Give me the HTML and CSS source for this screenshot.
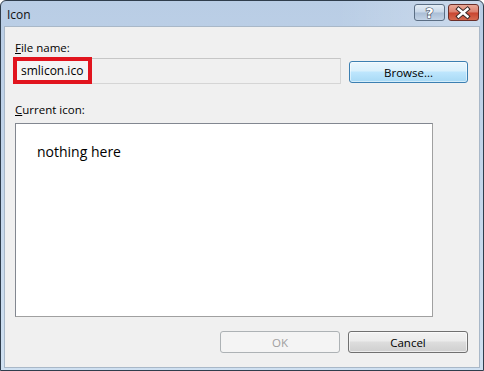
FILE: index.html
```html
<!DOCTYPE html>
<html>
<head>
<meta charset="utf-8">
<link rel="stylesheet" href="styles.css">
</head>
<body>
<div class="window">
  <div class="titlebar">
    <span class="title">Icon</span>
    <div class="caption-buttons">
      <div class="cap-btn help">
        <svg width="31" height="17" viewBox="0 0 31 17"><text x="15.5" y="14" text-anchor="middle" class="q">?</text></svg>
      </div>
      <div class="cap-btn close">
        <svg width="31" height="17" viewBox="0 0 31 17">
          <path d="M10.5 5 L19.5 12.5 M19.5 5 L10.5 12.5" stroke="#3a2a28" stroke-width="4.4" stroke-linecap="square"/>
          <path d="M10.5 5 L19.5 12.5 M19.5 5 L10.5 12.5" stroke="#ffffff" stroke-width="2.4" stroke-linecap="square"/>
        </svg>
      </div>
    </div>
  </div>
  <div class="client">
    <div class="label"><u>F</u>ile name:</div>
    <div class="file-row">
      <div class="textfield">
        <span class="highlight">smlicon.ico</span>
      </div>
      <button class="btn default">Browse...</button>
    </div>
    <div class="label label-current"><u>C</u>urrent icon:</div>
    <div class="iconbox"><span class="nothing">nothing here</span></div>
    <div class="actions">
      <button class="btn disabled">OK</button>
      <button class="btn">Cancel</button>
    </div>
  </div>
</div>
</body>
</html>
```

FILE: styles.css
```css
* { box-sizing: border-box; }
html, body { margin: 0; padding: 0; }
body {
  width: 484px;
  height: 371px;
  background: #ffffff;
  font-family: "Open Sans", "Noto Sans", sans-serif;
  font-size: 11.5px;
  color: #000;
  overflow: hidden;
}
.window {
  width: 484px;
  height: 371px;
  border: 1px solid #2f3d4c;
  border-radius: 6px 6px 0 0;
  background: linear-gradient(180deg, #b9cde5 0%, #c6d8ec 60%, #cfe0f1 100%);
  padding: 0 3px 2px 3px;
  display: flex;
  flex-direction: column;
}
.titlebar {
  height: 25px;
  display: flex;
  align-items: flex-start;
  justify-content: space-between;
  background: linear-gradient(90deg, rgba(255,255,255,0) 0%, rgba(255,255,255,0) 70%, rgba(255,255,255,0.25) 100%);
}
.title {
  font-family: "Open Sans", "Noto Sans", sans-serif;
  font-size: 12px;
  line-height: 16px;
  margin: 6px 0 0 3px;
  color: #111;
}
.caption-buttons {
  display: flex;
  gap: 3px;
  margin-top: 3px;
  margin-right: 1px;
}
.cap-btn {
  height: 17px;
  border: 1px solid #5b6e84;
  border-radius: 3px;
  overflow: hidden;
  display: flex;
}
.cap-btn svg { display: block; margin: -1px; }
.help {
  width: 31px;
  background: linear-gradient(180deg, #e4edf6 0%, #c8d7e8 48%, #a9bdd5 52%, #c3d3e6 100%);
}
.q {
  font-family: "DejaVu Sans", sans-serif;
  font-size: 14px;
  font-weight: bold;
  fill: #ffffff;
  stroke: #3f4d5e;
  stroke-width: 1.2px;
  paint-order: stroke;
}
.close {
  width: 31px;
  border-color: #6b2f29;
  background: linear-gradient(180deg, #e9a998 0%, #dc7f6d 48%, #c8442f 52%, #d66a4f 100%);
}
.client {
  flex: 1;
  background: #f0f0f0;
  border: 1px solid #a9b8c8;
  padding: 13px 0 0 10px;
  display: flex;
  flex-direction: column;
}
.label {
  line-height: 15px;
  height: 15px;
}
.file-row {
  display: flex;
  align-items: flex-start;
  margin-top: 3px;
}
.textfield {
  width: 326px;
  height: 26px;
  border: 1px solid #d5d5d5;
  border-top-color: #c6c6c6;
  background: #f0f0f0;
  position: relative;
}
.highlight {
  position: absolute;
  left: -3px;
  top: -2px;
  width: 79px;
  height: 27px;
  border: 4px solid #e1141e;
  padding-left: 4px;
  line-height: 19px;
  font-size: 12px;
  background: #f4f4f4;
}
.btn {
  font-family: "Open Sans", "Noto Sans", sans-serif;
  font-size: 11.5px;
  color: #000;
  width: 120px;
  height: 22px;
  border: 1px solid #707070;
  border-radius: 3px;
  background: linear-gradient(180deg, #f2f2f2 0%, #ebebeb 45%, #dddddd 50%, #cfcfcf 100%);
  box-shadow: inset 0 0 0 1px rgba(255,255,255,0.6);
  padding: 0;
  line-height: 19px;
}
.file-row .btn {
  margin-top: 3px;
  margin-left: 8px;
  width: 119px;
}
.btn.default {
  border-color: #3c7fb1;
  background: linear-gradient(180deg, #eaf6fd 0%, #d9f0fc 45%, #bee6fd 50%, #a7d9f5 100%);
  box-shadow: inset 0 0 0 1px rgba(255,255,255,0.5);
}
.btn.disabled {
  border-color: #adb2b5;
  background: #f4f4f4;
  color: #a0a0a0;
  box-shadow: none;
}
.label-current {
  margin-top: 18px;
}
.iconbox {
  margin-top: 6px;
  width: 418px;
  height: 194px;
  background: #ffffff;
  border: 1px solid #828790;
  border-right-color: #a0a0a0;
  border-bottom-color: #a0a0a0;
  padding: 19px 0 0 21px;
}
.nothing {
  font-size: 14px;
  line-height: 18px;
}
.actions {
  display: flex;
  gap: 8px;
  margin-top: 14px;
  padding-left: 205px;
}
```
